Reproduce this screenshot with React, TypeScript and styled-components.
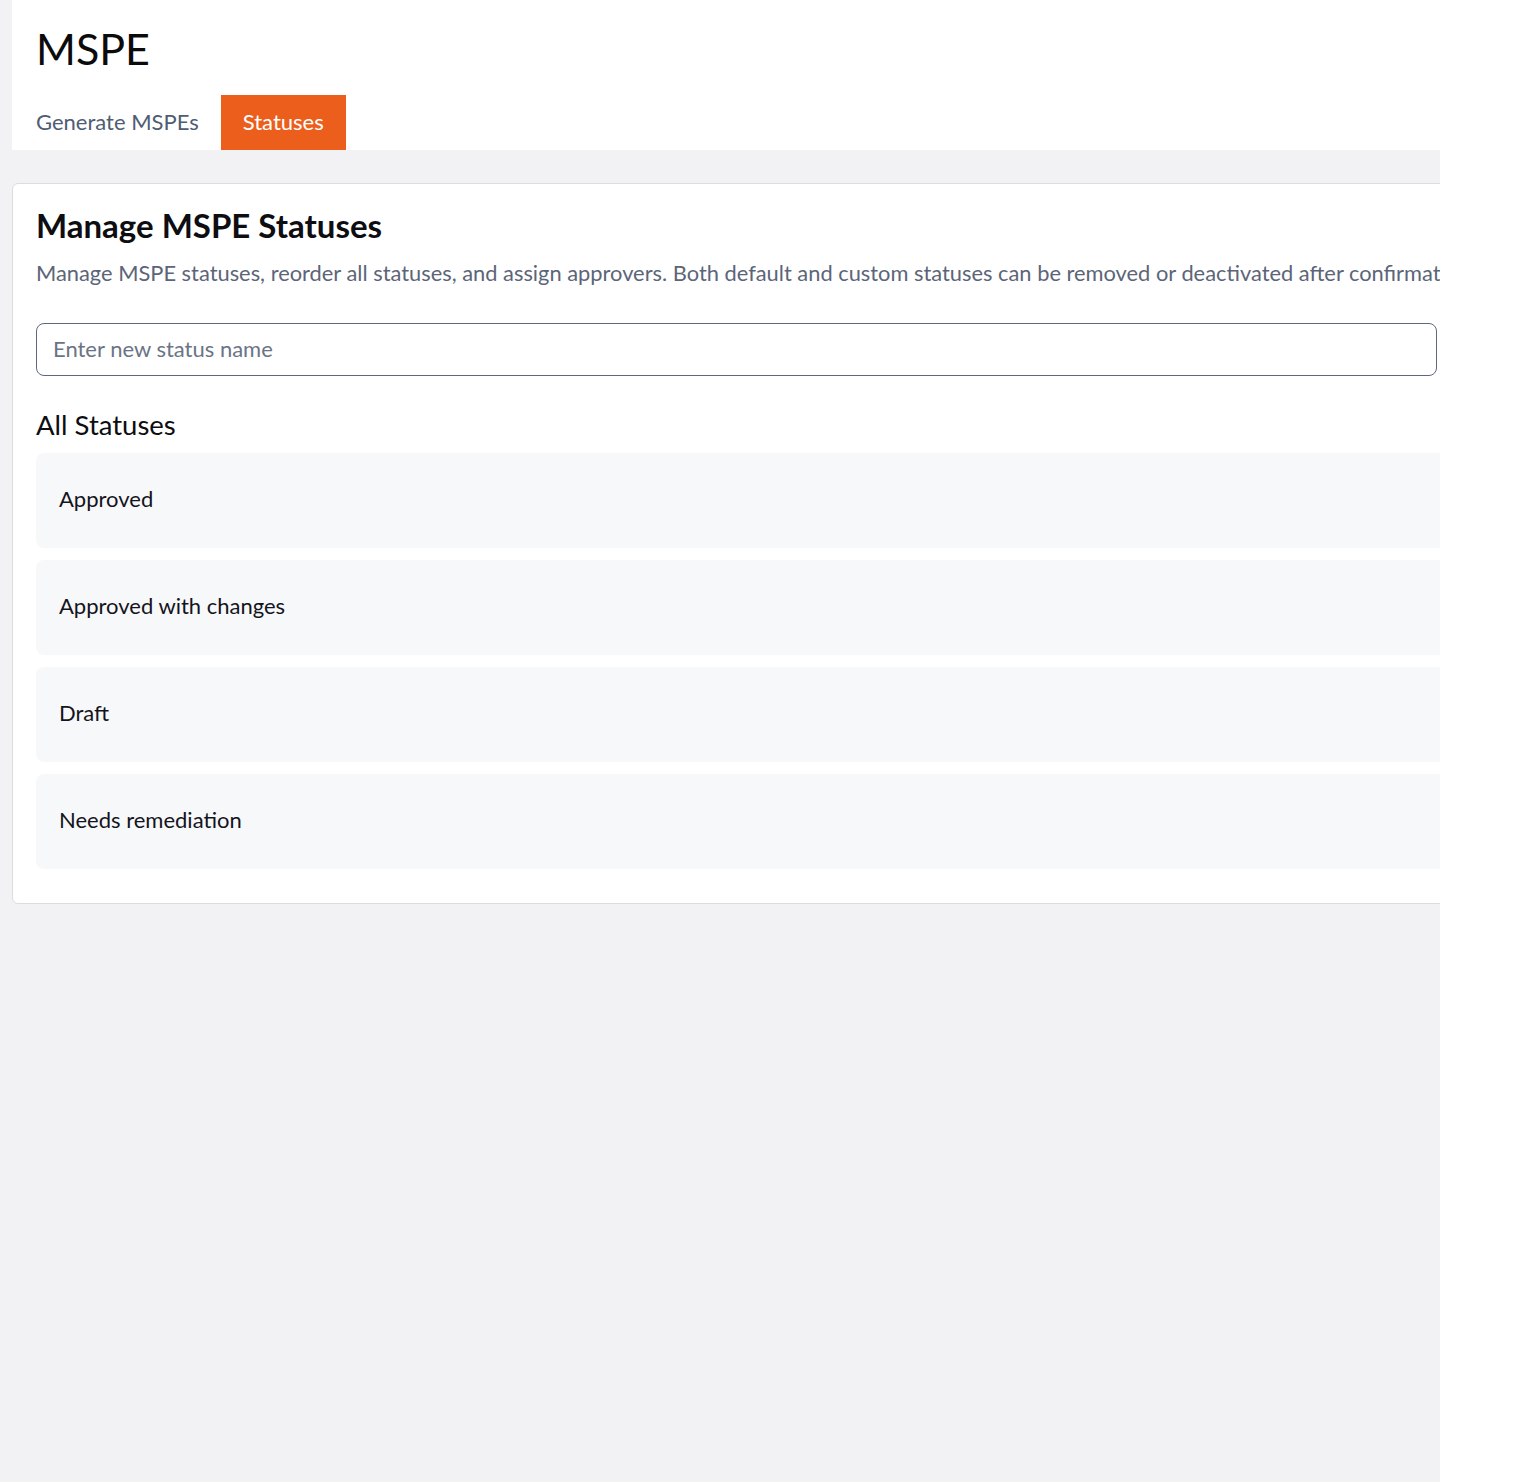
import React from "react";
import styled, { createGlobalStyle } from "styled-components";

const GlobalStyle = createGlobalStyle`
  html, body {
    margin: 0;
    padding: 0;
    background: #ffffff;
  }
  body {
    font-family: Lato, "Noto Sans", "Liberation Sans", sans-serif;
  }
  * { box-sizing: border-box; }
`;

const Frame = styled.div`
  width: 1440px;
  min-height: 1482px;
  background: #f2f2f4;
  padding-left: 12px;
  overflow: hidden;
`;

const Header = styled.header`
  background: #ffffff;
  padding: 23px 2px 0;
`;

const PageTitle = styled.h1`
  margin: 0;
  padding: 0 22px;
  font-size: 43px;
  font-weight: 400;
  line-height: 1.2;
  color: #0b0b0b;
`;

const Tabs = styled.nav`
  display: flex;
  margin-top: 20px;
`;

const Tab = styled.button<{ $active?: boolean }>`
  height: 55px;
  padding: 0 22px 2px;
  border: none;
  font-family: inherit;
  font-size: 22px;
  display: flex;
  align-items: center;
  cursor: pointer;
  background: ${(p) => (p.$active ? "#ec5e1b" : "transparent")};
  color: ${(p) => (p.$active ? "#ffffff" : "#4f5d73")};
`;

const Card = styled.section`
  margin-top: 33px;
  width: 1600px;
  background: #ffffff;
  border: 1px solid #dcdcdf;
  border-radius: 6px;
  padding: 22px 23px 34px;
`;

const CardTitle = styled.h2`
  margin: 0;
  font-size: 33px;
  font-weight: 700;
  line-height: 1.2;
  color: #0d0d12;
`;

const Description = styled.p`
  margin: 15px 0 0;
  font-size: 21.85px;
  line-height: 26.4px;
  color: #5c6578;
  white-space: nowrap;
`;

const StatusInput = styled.input`
  display: block;
  margin-top: 36px;
  width: 1401px;
  height: 53px;
  padding: 0 16px 2px;
  border: 1.5px solid #5b6880;
  border-radius: 8px;
  font-family: inherit;
  font-size: 22px;
  color: #1a1a1a;
  background: #ffffff;
  outline: none;
  &::placeholder {
    color: #6b7485;
  }
`;

const SectionTitle = styled.h3`
  margin: 32px 0 0;
  font-size: 27.5px;
  font-weight: 400;
  line-height: 33px;
  color: #0d0d12;
`;

const StatusList = styled.ul`
  list-style: none;
  margin: 12px 0 0;
  padding: 0;
  display: flex;
  flex-direction: column;
  gap: 11.5px;
`;

const StatusRow = styled.li`
  height: 95.5px;
  background: #f7f8fa;
  border-radius: 8px;
  padding: 0 23px 3px;
  display: flex;
  align-items: center;
  font-size: 22px;
  color: #14141c;
`;

const statuses = ["Approved", "Approved with changes", "Draft", "Needs remediation"];

export default function App() {
  return (
    <>
      <GlobalStyle />
      <Frame>
        <Header>
          <PageTitle>MSPE</PageTitle>
          <Tabs>
            <Tab>Generate MSPEs</Tab>
            <Tab $active>Statuses</Tab>
          </Tabs>
        </Header>
        <Card>
          <CardTitle>Manage MSPE Statuses</CardTitle>
          <Description>
            Manage MSPE statuses, reorder all statuses, and assign approvers. Both default and custom statuses can be removed or deactivated after confirmation.
          </Description>
          <StatusInput placeholder="Enter new status name" />
          <SectionTitle>All Statuses</SectionTitle>
          <StatusList>
            {statuses.map((s) => (
              <StatusRow key={s}>{s}</StatusRow>
            ))}
          </StatusList>
        </Card>
      </Frame>
    </>
  );
}
